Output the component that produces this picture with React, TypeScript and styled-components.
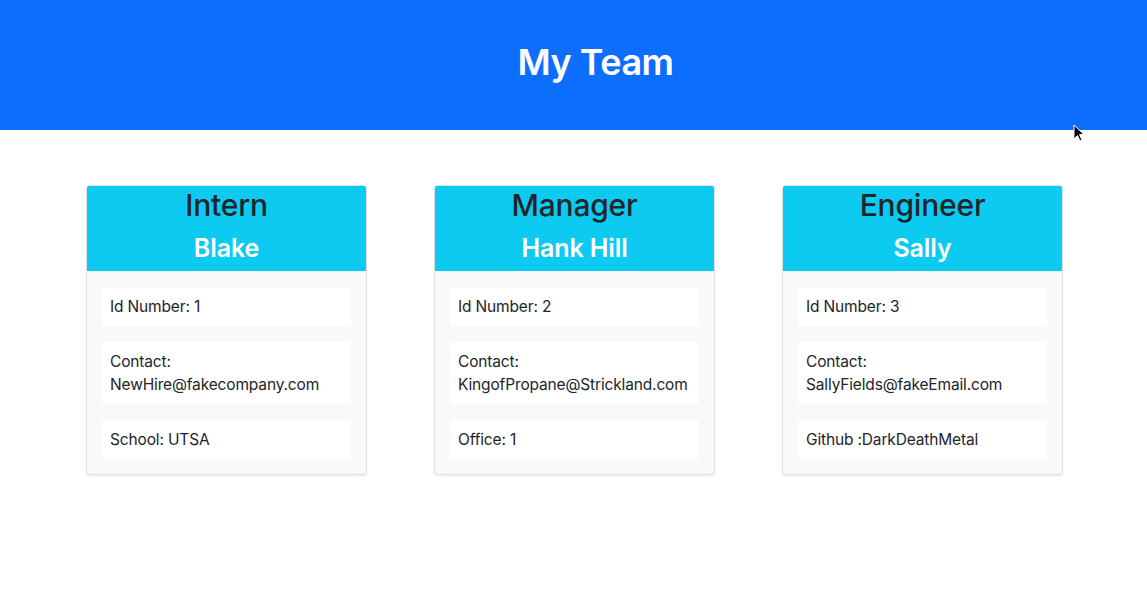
import React from "react";
import styled, { createGlobalStyle } from "styled-components";

const Global = createGlobalStyle`
  * { box-sizing: border-box; }
  body {
    margin: 0;
    font-family: Inter, "Liberation Sans", Arial, sans-serif;
    color: #212529;
    background: #fff;
  }
`;

const Page = styled.div`
  position: relative;
  width: 100%;
  min-height: 595px;
`;

const Banner = styled.header`
  height: 130px;
  background: #0d6efd;
  display: flex;
  align-items: center;
  justify-content: center;
  padding-left: 44px;
`;

const Title = styled.h1`
  margin: 0 0 6px;
  color: #fff;
  font-size: 36px;
  font-weight: 600;
  letter-spacing: -0.5px;
`;

const CardRow = styled.main`
  display: flex;
  justify-content: center;
  gap: 67px;
  padding-top: 55px;
  padding-left: 2px;
`;

const Card = styled.section`
  width: 281px;
  border: 1px solid #dee2e6;
  border-radius: 3px;
  overflow: hidden;
  background: #f8f9fa;
  box-shadow: 0 1px 2px rgba(0, 0, 0, 0.08);
`;

const CardHead = styled.div`
  height: 85px;
  background: #0dcaf0;
  display: flex;
  flex-direction: column;
  align-items: center;
`;

const Role = styled.h2`
  margin: 0;
  font-size: 30px;
  font-weight: 500;
  line-height: 38px;
  color: #212529;
  letter-spacing: -0.2px;
`;

const Name = styled.h3`
  margin: 9px 0 0;
  font-size: 25px;
  font-weight: 600;
  line-height: 30px;
  color: #fff;
  letter-spacing: -0.1px;
`;

const CardBody = styled.ul`
  list-style: none;
  margin: 0;
  padding: 16px 15px 15px;
  display: flex;
  flex-direction: column;
  gap: 16px;
`;

const Item = styled.li`
  background: #fff;
  padding: 8px;
  font-size: 15.5px;
  line-height: 23px;
  color: #212529;
  letter-spacing: -0.15px;
`;

const Cursor = styled.svg`
  position: absolute;
  left: 1073px;
  top: 124px;
`;

type Member = { role: string; name: string; id: number; email: string; extra: string };

const team: Member[] = [
  { role: "Intern", name: "Blake", id: 1, email: "NewHire@fakecompany.com", extra: "School: UTSA" },
  { role: "Manager", name: "Hank Hill", id: 2, email: "KingofPropane@Strickland.com", extra: "Office: 1" },
  { role: "Engineer", name: "Sally", id: 3, email: "SallyFields@fakeEmail.com", extra: "Github :DarkDeathMetal" },
];

export default function App() {
  return (
    <Page>
      <Global />
      <Banner>
        <Title>My Team</Title>
      </Banner>
      <CardRow>
        {team.map((m) => (
          <Card key={m.id}>
            <CardHead>
              <Role>{m.role}</Role>
              <Name>{m.name}</Name>
            </CardHead>
            <CardBody>
              <Item>Id Number: {m.id}</Item>
              <Item>
                Contact:
                <br />
                {m.email}
              </Item>
              <Item>{m.extra}</Item>
            </CardBody>
          </Card>
        ))}
      </CardRow>
      <Cursor width="12" height="19" viewBox="0 0 12 19">
        <path d="M1 1 L1 15 L4.5 11.5 L7 17 L9 16 L6.5 10.5 L11 10.5 Z" fill="#000" stroke="#fff" strokeWidth="1" />
      </Cursor>
    </Page>
  );
}
